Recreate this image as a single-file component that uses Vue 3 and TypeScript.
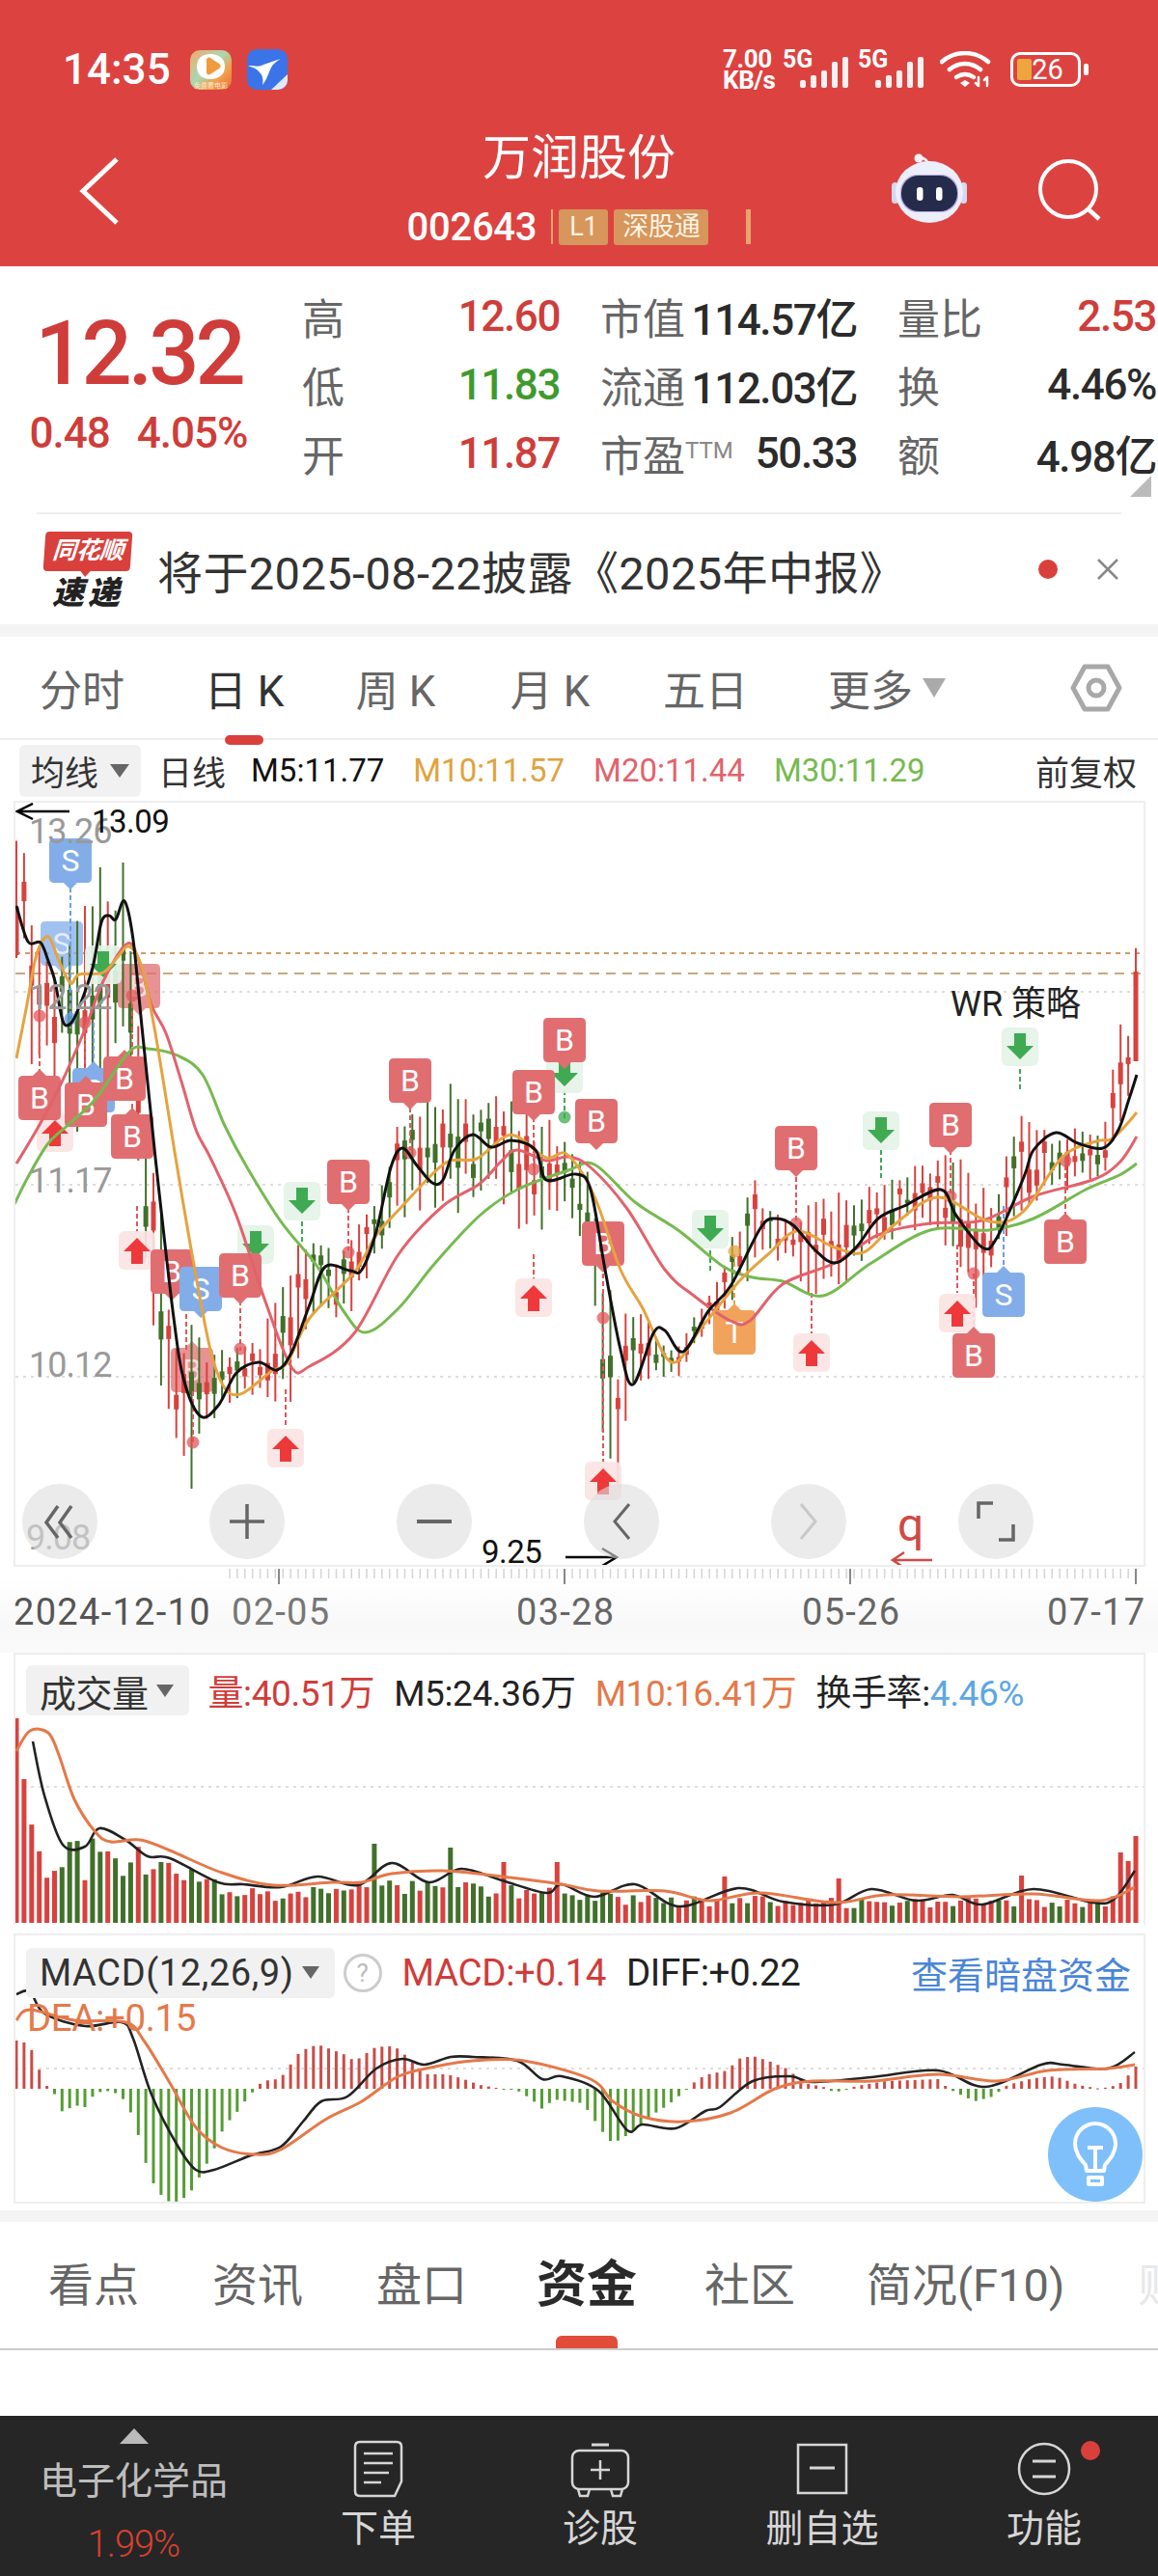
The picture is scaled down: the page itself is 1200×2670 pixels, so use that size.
<template>
  <div class="page">
    <header class="top">
      <div class="status">
        <span class="clock">14:35</span>
        <svg class="app-icon" width="43" height="41" viewBox="0 0 43 41">
          <defs>
            <linearGradient id="appg" x1="0" y1="0" x2="1" y2="1">
              <stop offset="0" stop-color="#f5a86a" />
              <stop offset="0.45" stop-color="#a8d8b0" />
              <stop offset="0.7" stop-color="#f2a04c" />
              <stop offset="1" stop-color="#ec6a32" />
            </linearGradient>
          </defs>
          <rect width="43" height="41" rx="10" fill="url(#appg)" />
          <path d="M21 4c9 0 15 5 15 13s-6 13-15 13S7 25 7 17 12 4 21 4z" fill="#fff" />
          <path d="M17 10c0-2 2-3 4-2l9 6c2 1 2 4 0 5l-9 6c-2 1-4 0-4-2z" fill="#f09a3c" />
          <text x="21.5" y="38.5" class="app-small">免费看电影</text>
        </svg>
        <svg class="app-icon app-icon--gap" width="42" height="42" viewBox="0 0 42 42">
          <rect width="42" height="42" rx="10" fill="#3a74e8" />
          <path d="M1 17c7 0 11 2 16-1 6-2 11-4 18-6-5 3-8 5-10 9-3 6-4 12-9 18 1-6 0-10-3-13-3-4-7-5-12-7z" fill="#fff" />
          <path d="M42 26v6a10 10 0 0 1-10 10h-7z" fill="#dfe9fb" />
        </svg>
        <div class="status__right">
          <div class="speed"><span>7.00</span><span>KB/s</span></div>
          <div class="net"><span class="net__g">5G</span>
            <svg width="52" height="34" viewBox="0 0 52 34"><rect v-for="(h, i) in sig" :key="i" :x="i * 11" :y="34 - h" width="6" :height="h" rx="2" fill="#fff" opacity="0.92" /></svg>
          </div>
          <div class="net"><span class="net__g">5G</span>
            <svg width="52" height="34" viewBox="0 0 52 34"><rect v-for="(h, i) in sig" :key="i" :x="i * 11" :y="34 - h" width="6" :height="h" rx="2" fill="#fff" opacity="0.92" /></svg>
          </div>
          <svg class="wifi" width="54" height="38" viewBox="0 0 54 38" fill="none" stroke="#fff" stroke-width="4.5" stroke-linecap="round">
            <path d="M2 11C16-1 36-1 50 11" />
            <path d="M10 19c10-8 22-8 32 0" />
            <path d="M17 27c6-4 12-4 18 0" />
            <path d="M21 33l5-3 5 3-5 4z" fill="#fff" stroke="none" />
            <path d="M40 27v9m-3-3l3 3m9-9v9m-3-6l3-3" stroke-width="2.5" />
          </svg>
          <div class="battery"><i class="battery__fill"></i><span>26</span></div>
          <i class="battery__tip"></i>
        </div>
      </div>
      <div class="nav">
        <svg class="nav__back" width="42" height="72" viewBox="0 0 42 72" fill="none" stroke="#fff" stroke-width="5"><path d="M39 3L4 36l35 33" /></svg>
        <div class="nav__center">
          <div class="nav__title">万润股份</div>
          <div class="nav__code">
            <span>002643</span>
            <i class="sep"></i>
            <em class="badge badge--l">L1</em>
            <em class="badge">深股通</em>
            <i class="sep sep--thick"></i>
          </div>
        </div>
        <div class="nav__right">
          <svg width="80" height="74" viewBox="0 0 80 74">
            <path d="M28 5c6-1 10 3 11 9" stroke="#f4eef8" stroke-width="3" fill="none" />
            <circle cx="28" cy="5" r="4.5" fill="#f6f2fa" />
            <rect x="0" y="30" width="7" height="22" rx="3.5" fill="#d5d8f0" />
            <rect x="71" y="30" width="7" height="22" rx="3.5" fill="#d5d8f0" />
            <ellipse cx="39" cy="40" rx="35" ry="32" fill="#eceefa" />
            <rect x="9" y="22" width="60" height="39" rx="18" fill="#8a6fd0" opacity="0.55" />
            <rect x="10" y="23" width="58" height="37" rx="18" fill="#252c4b" />
            <rect x="26" y="35" width="6.5" height="14" rx="3.2" fill="#fff" />
            <rect x="46" y="35" width="6.5" height="14" rx="3.2" fill="#fff" />
          </svg>
          <svg class="nav__search" width="66" height="68" viewBox="0 0 66 68" fill="none" stroke="#fff" stroke-width="4"><circle cx="31" cy="31" r="29" /><path d="M52 52l11 10" stroke-width="4.5" /></svg>
        </div>
      </div>
    </header>

    <section class="quote">
      <div class="price">
        <div class="price__now">12.32</div>
        <div class="price__sub"><span>0.48</span><span>4.05%</span></div>
      </div>
      <div class="stats">
        <template v-for="row in stats" :key="row[0].l">
          <div v-for="c in row" :key="c.l" class="stat">
            <span class="stat__l">{{ c.l }}<sup v-if="c.sup">{{ c.sup }}</sup></span>
            <span class="stat__v" :class="c.c">{{ c.v }}</span>
          </div>
        </template>
      </div>
      <i class="corner"></i>
    </section>

    <div class="news">
      <div class="news__logo">
        <span class="news__flag"><b>同花顺</b></span>
        <span class="news__fast">速递</span>
      </div>
      <span class="news__text">将于2025-08-22披露《2025年中报》</span>
      <i class="news__dot"></i>
      <svg width="24" height="24" viewBox="0 0 24 24" stroke="#888" stroke-width="2.5"><path d="M2 2l20 20M22 2L2 22" /></svg>
    </div>
    <div class="band"></div>

    <nav class="periods">
      <span v-for="p in periods" :key="p" class="period" :class="{ 'period--on': p === '日 K' }">{{ p }}</span>
      <svg class="gear" width="54" height="50" viewBox="0 0 54 50" fill="none" stroke="#a8a8a8" stroke-width="5" stroke-linejoin="round">
        <path d="M15 3h24l12 22-12 22H15L3 25z" />
        <circle cx="27" cy="25" r="8" />
      </svg>
    </nav>

    <div class="ma">
      <span class="chip">均线<i class="tri"></i></span>
      <span class="ma__day">日线</span>
      <span class="ma__v ma__v--first">M5:11.77</span>
      <span class="ma__v c-m10">M10:11.57</span>
      <span class="ma__v c-m20">M20:11.44</span>
      <span class="ma__v c-m30">M30:11.29</span>
      <span class="ma__adj">前复权</span>
    </div>

    <div class="kline">
      <svg class="fill" viewBox="16 832 1169 790" width="1169" height="790">
        <g stroke="#ddd" stroke-width="2" stroke-dasharray="3 5">
          <line x1="16" x2="1185" y1="1028" y2="1028" />
          <line x1="16" x2="1185" y1="1228" y2="1228" />
          <line x1="16" x2="1185" y1="1427" y2="1427" />
        </g>
        <line x1="16" x2="1185" y1="988" y2="988" stroke="#cf9a66" stroke-width="2" stroke-dasharray="5 5" />
        <line x1="16" x2="1185" y1="1009" y2="1009" stroke="#c9a87c" stroke-width="2" stroke-dasharray="10 7" />

        <g v-for="t in tags.filter((m) => m.under)" :key="t.key">
          <path :d="tagPath(t)" :fill="tagFill(t.k)" opacity="0.75" />
          <text :x="t.x" :y="t.y + 11" class="tag-text" opacity="0.7">{{ t.k }}</text>
        </g>

        <g v-for="c in candles" :key="c.x">
          <line :x1="c.x" :x2="c.x" :y1="c.high" :y2="c.low" :stroke="c.color" stroke-width="2" />
          <rect :x="c.x - 2.5" :y="c.top" width="5" :height="c.h" :fill="c.color" />
        </g>

        <g v-for="s in stems" :key="s.x + '-' + s.y1">
          <line :x1="s.x" :x2="s.x" :y1="s.y1" :y2="s.y2" :stroke="s.c" stroke-width="2" stroke-dasharray="5 3" />
          <circle v-if="s.dot" :cx="s.x" :cy="s.dot" r="6.5" :fill="s.c" opacity="0.75" />
        </g>

        <g v-for="a in arrows" :key="a.x + '-' + a.y">
          <rect :x="a.x - 19" :y="a.y - 20" width="38" height="40" rx="6" :fill="a.up ? '#fbe4e4' : '#e4f3e7'" opacity="0.92" />
          <path v-if="a.up" :d="`M${a.x} ${a.y - 13}l14 14h-8v13h-12v-13h-8z`" fill="#ee383a" />
          <path v-else :d="`M${a.x} ${a.y + 13}l14 -14h-8v-13h-12v13h-8z`" fill="#3faa52" />
        </g>

        <g v-for="t in tags.filter((m) => !m.under)" :key="t.key">
          <path :d="tagPath(t)" :fill="tagFill(t.k)" />
          <text :x="t.x" :y="t.y + 11" class="tag-text">{{ t.k }}</text>
        </g>

        <path :d="smooth(m30)" class="ma-line" stroke="#76ba50" />
        <path :d="smooth(m20)" class="ma-line" stroke="#e2626c" />
        <path :d="smooth(m10)" class="ma-line" stroke="#e5a340" />
        <path :d="smooth(m5)" class="ma-line" stroke="#111" />

        <text x="30" y="874" class="axis-price">13.26</text>
        <text x="30" y="1046" class="axis-price">12.22</text>
        <text x="30" y="1236" class="axis-price">11.17</text>
        <text x="30" y="1427" class="axis-price">10.12</text>
        <text x="27" y="1606" class="axis-price">9.08</text>

        <path d="M72 841H18m16-8l-16 8 16 8" fill="none" stroke="#000" stroke-width="2.5" />
        <text x="95" y="863" class="mark-text">13.09</text>
        <text x="499" y="1620" class="mark-text">9.25</text>
        <path d="M586 1614h52m-14-9l15 9-15 9" fill="none" stroke="#000" stroke-width="2.5" />
        <text x="985" y="1053" class="wr-text">WR 策略</text>
        <text x="930" y="1597" class="q-text">q</text>
        <path d="M966 1617h-40m11-8l-12 8 12 8" fill="none" stroke="#cf4a45" stroke-width="2.5" />
      </svg>
      <div class="tools">
        <button class="tool"><svg width="40" height="40" viewBox="0 0 40 40" fill="none" stroke="#666" stroke-width="3.5"><path d="M18 4L6 21l12 16M32 4L20 21l12 16" /></svg></button>
        <button class="tool"><svg width="36" height="36" viewBox="0 0 36 36" stroke="#666" stroke-width="3.5"><path d="M18 0v36M0 18h36" /></svg></button>
        <button class="tool"><svg width="36" height="36" viewBox="0 0 36 36" stroke="#666" stroke-width="4"><path d="M0 18h36" /></svg></button>
        <button class="tool"><svg width="24" height="40" viewBox="0 0 24 40" fill="none" stroke="#666" stroke-width="3"><path d="M20 2L5 20l15 18" /></svg></button>
        <button class="tool"><svg width="24" height="40" viewBox="0 0 24 40" fill="none" stroke="#c8c8c8" stroke-width="3"><path d="M4 2l15 18L4 38" /></svg></button>
        <button class="tool"><svg width="42" height="42" viewBox="0 0 42 42" fill="none" stroke="#666" stroke-width="3.5"><path d="M18 2H3v16M24 40h15V24" /></svg></button>
      </div>
    </div>

    <div class="axis">
      <svg viewBox="0 1624 1200 89" width="1200" height="89">
        <line v-for="x in fineTicks" :key="x" :x1="x" :x2="x" y1="1626" y2="1636" stroke="#d4d4d4" stroke-width="1.5" />
        <line v-for="x in [289, 585, 881, 1177]" :key="x" :x1="x" :x2="x" y1="1626" y2="1642" stroke="#888" stroke-width="2" />
        <text x="14" y="1684" class="date date--first">2024-12-10</text>
        <text x="240" y="1684" class="date date--fade">02-05</text>
        <text x="535" y="1684" class="date">03-28</text>
        <text x="831" y="1684" class="date">05-26</text>
        <text x="1085" y="1684" class="date">07-17</text>
      </svg>
    </div>

    <div class="panel panel--vol">
      <svg class="fill" viewBox="16 1715 1169 278" width="1169" height="278">
        <line x1="16" x2="1185" y1="1852" y2="1852" stroke="#ddd" stroke-width="2" stroke-dasharray="3 5" />
        <rect v-for="b in volBars" :key="b.x" :x="b.x - 2.5" :y="b.y" width="5" :height="1993 - b.y" :fill="b.c" />
        <path :d="smooth(volA)" class="vol-line" stroke="#222" />
        <path :d="smooth(volB)" class="vol-line vol-line--w" stroke="#e4794a" />
      </svg>
      <div class="panel__head">
        <span class="chip chip--sm chip--vol">成交量<i class="tri tri--sm"></i></span>
        <span class="c-red">量:40.51万</span>
        <span>M5:24.36万</span>
        <span class="c-org">M10:16.41万</span>
        <span>换手率:<span class="c-blue">4.46%</span></span>
      </div>
    </div>

    <div class="panel panel--macd">
      <svg class="fill" viewBox="16 2006 1169 277" width="1169" height="277">
        <line x1="16" x2="1185" y1="2144" y2="2144" stroke="#ddd" stroke-width="2" stroke-dasharray="3 5" />
        <rect v-for="b in macdBars" :key="b.x" :x="b.x - 1.5" :y="b.y" width="3" :height="b.h" :fill="b.c" />
        <path :d="smooth(macdA)" class="vol-line" stroke="#222" />
        <path :d="smooth(macdB)" class="vol-line vol-line--w" stroke="#e4794a" />
      </svg>
      <div class="panel__head panel__head--macd">
        <span class="chip chip--sm chip--macd">MACD(12,26,9)<i class="tri tri--sm"></i></span>
        <i class="help">?</i>
        <span class="c-red">MACD:+0.14</span>
        <span>DIFF:+0.22</span>
        <a class="dark-link">查看暗盘资金</a>
      </div>
      <div class="dea">DEA:+0.15</div>
      <div class="bulb">
        <svg width="48" height="68" viewBox="0 0 48 68" fill="none" stroke="#fff" stroke-width="4" stroke-linejoin="round">
          <path d="M14 45C8 38 3 32 3 23a21 21 0 0 1 42 0c0 9-5 15-11 22l-1 6H15z" />
          <path d="M16 27h16M24 27v22M17 58h14v7H17z" />
        </svg>
      </div>
    </div>
    <div class="band band--low"></div>

    <nav class="sections">
      <span v-for="s in sections" :key="s" class="section" :class="{ 'section--on': s === '资金' }">{{ s }}</span>
      <span class="section section--fade">财</span>
    </nav>
    <div class="blank"></div>

    <footer class="bar">
      <div class="bar__sector">
        <i class="bar__tri"></i>
        <span class="bar__name">电子化学品</span>
        <span class="bar__pct">1.99%</span>
      </div>
      <div class="bar__item">
        <svg width="52" height="60" viewBox="0 0 52 60" fill="none" stroke="#d6d6d6" stroke-width="2.5">
          <path d="M2 7q0-5 5-5h38q5 0 5 5v36l-7 15H7q-5 0-5-5z" />
          <path d="M11 14h30M11 24h30M11 34h26M11 44h18" />
        </svg>
        <span>下单</span>
      </div>
      <div class="bar__item">
        <svg width="62" height="60" viewBox="0 0 62 60" fill="none" stroke="#d6d6d6" stroke-width="2.5">
          <path d="M22 5h18" stroke-width="3" />
          <rect x="2" y="11" width="58" height="40" rx="7" />
          <path d="M31 21v20M21 31h20" />
          <path d="M8 51l2 7h8l2-7M42 51l2 7h8l2-7" />
        </svg>
        <span>诊股</span>
      </div>
      <div class="bar__item">
        <svg width="54" height="60" viewBox="0 0 54 60" fill="none" stroke="#d6d6d6" stroke-width="2.5">
          <rect x="2" y="5" width="50" height="50" />
          <path d="M14 29h26" stroke-width="3" />
        </svg>
        <span>删自选</span>
      </div>
      <div class="bar__item bar__item--dot">
        <svg width="56" height="60" viewBox="0 0 56 60" fill="none" stroke="#d6d6d6" stroke-width="2.5">
          <circle cx="28" cy="30" r="26" />
          <path d="M16 22h24M16 38h24" stroke-width="3" />
        </svg>
        <span>功能</span>
      </div>
    </footer>
  </div>
</template>

<script setup lang="ts">
type Pt = [number, number]

interface Tag {
  key: string
  k: string
  x: number
  y: number
  dir: 'up' | 'down'
  under?: boolean
}

const sig = [8, 13, 18, 27, 32]

const stats = [
  [
    { l: '高', v: '12.60', c: 'c-red' },
    { l: '市值', v: '114.57亿', c: '' },
    { l: '量比', v: '2.53', c: 'c-red' },
  ],
  [
    { l: '低', v: '11.83', c: 'c-green' },
    { l: '流通', v: '112.03亿', c: '' },
    { l: '换', v: '4.46%', c: '' },
  ],
  [
    { l: '开', v: '11.87', c: 'c-red' },
    { l: '市盈', sup: 'TTM', v: '50.33', c: '' },
    { l: '额', v: '4.98亿', c: '' },
  ],
]

const periods = ['分时', '日 K', '周 K', '月 K', '五日', '更多']
const sections = ['看点', '资讯', '盘口', '资金', '社区', '简况(F10)']

// traced from the chart, in page pixels
const m5: Pt[] = [[17,939],[29,976],[42,977],[50,996],[57,1017],[65,1058],[73,1061],[82,1044],[96,1003],[105,956],[113,949],[120,953],[129,934],[138,974],[147,1064],[161,1200],[180,1366],[191,1432],[208,1468],[226,1457],[245,1423],[268,1412],[287,1420],[302,1402],[321,1352],[337,1313],[363,1317],[375,1316],[390,1276],[405,1210],[417,1190],[432,1208],[448,1226],[459,1223],[471,1192],[490,1176],[509,1189],[530,1182],[555,1192],[566,1223],[597,1217],[612,1233],[627,1316],[643,1399],[656,1435],[677,1382],[689,1379],[708,1401],[734,1359],[757,1333],[788,1273],[803,1263],[822,1270],[845,1296],[865,1309],[887,1293],[910,1263],[937,1250],[975,1233],[991,1260],[1018,1293],[1033,1283],[1061,1220],[1071,1192],[1094,1174],[1117,1185],[1143,1190],[1159,1171],[1170,1139],[1178,1114]]
const m10: Pt[] = [[17,1097],[27,1046],[38,989],[50,971],[61,996],[73,1019],[82,1010],[107,1008],[122,992],[134,981],[147,1003],[161,1071],[182,1200],[199,1300],[218,1399],[233,1439],[249,1445],[268,1432],[283,1420],[298,1412],[321,1366],[367,1319],[390,1280],[417,1250],[448,1217],[467,1203],[494,1201],[520,1180],[536,1178],[566,1200],[585,1195],[604,1217],[620,1250],[643,1316],[666,1356],[696,1412],[727,1376],[765,1329],[796,1300],[826,1276],[865,1293],[895,1298],[926,1270],[972,1241],[1025,1266],[1060,1256],[1101,1199],[1136,1183],[1151,1181],[1166,1167],[1178,1153]]
const m20: Pt[] = [[17,1206],[38,1171],[61,1128],[88,1067],[107,1017],[132,978],[145,999],[157,1042],[172,1071],[188,1121],[203,1171],[218,1200],[245,1260],[275,1349],[302,1417],[321,1416],[367,1382],[413,1300],[459,1250],[497,1227],[520,1203],[536,1192],[566,1203],[589,1199],[612,1210],[650,1253],[689,1316],[719,1343],[757,1369],[777,1369],[811,1331],[865,1309],[910,1280],[964,1268],[1018,1265],[1071,1240],[1132,1223],[1160,1205],[1178,1178]]
const m30: Pt[] = [[14,1250],[29,1220],[50,1185],[73,1164],[99,1139],[134,1090],[153,1087],[184,1094],[210,1114],[233,1167],[256,1210],[291,1266],[329,1313],[356,1359],[379,1381],[413,1356],[451,1309],[497,1260],[536,1233],[589,1213],[616,1207],[658,1246],[704,1276],[750,1313],[780,1324],[811,1328],[853,1343],[903,1309],[964,1275],[1025,1275],[1071,1263],[1125,1233],[1160,1218],[1178,1206]]

const highEnv: Pt[] = [[17,863],[25,865],[32,930],[40,930],[50,1000],[65,950],[80,906],[96,903],[105,874],[113,885],[129,881],[137,944],[145,1094],[153,1217],[165,1210],[180,1366],[200,1365],[226,1390],[265,1390],[304,1281],[329,1263],[350,1300],[375,1265],[390,1220],[405,1185],[420,1140],[440,1120],[480,1115],[510,1130],[550,1130],[560,1160],[590,1160],[600,1190],[612,1210],[627,1300],[640,1380],[655,1340],[680,1380],[700,1400],[720,1360],[735,1330],[755,1290],[770,1245],[777,1213],[800,1250],[830,1260],[850,1230],[880,1230],[920,1210],[950,1205],[975,1190],[990,1180],[1025,1241],[1040,1210],[1057,1131],[1075,1150],[1095,1170],[1145,1165],[1160,1050],[1170,1070],[1177,955]]
const lowEnv: Pt[] = [[17,1035],[25,980],[32,1130],[40,1120],[50,1117],[57,1200],[65,1103],[73,1240],[85,1140],[100,1120],[130,1100],[137,1160],[145,1220],[155,1362],[165,1430],[170,1470],[178,1535],[186,1490],[200,1563],[208,1520],[226,1460],[250,1450],[265,1455],[300,1460],[320,1370],[335,1375],[360,1370],[375,1340],[395,1300],[420,1270],[470,1260],[505,1245],[552,1300],[570,1280],[590,1260],[610,1300],[625,1490],[640,1575],[655,1440],[705,1428],[720,1400],[745,1370],[765,1340],[790,1310],[820,1310],[840,1360],[850,1330],[870,1335],[900,1310],[940,1270],[985,1300],[1000,1340],[1010,1370],[1030,1320],[1050,1270],[1080,1240],[1130,1230],[1150,1210],[1165,1160],[1177,1110]]

const volA: Pt[] = [[34,1805],[46,1861],[65,1912],[88,1914],[103,1895],[130,1907],[153,1924],[176,1926],[226,1951],[252,1953],[291,1956],[329,1945],[371,1954],[406,1931],[444,1951],[478,1937],[520,1949],[566,1962],[582,1953],[616,1966],[658,1953],[704,1976],[765,1957],[811,1971],[865,1974],[903,1958],[949,1970],[987,1964],[1018,1974],[1071,1958],[1132,1972],[1155,1968],[1176,1939]]
const volB: Pt[] = [[17,1815],[31,1794],[50,1796],[61,1819],[77,1865],[99,1899],[115,1909],[145,1907],[176,1918],[230,1941],[283,1954],[344,1951],[375,1951],[406,1942],[459,1939],[520,1945],[582,1953],[620,1960],[689,1960],[735,1970],[788,1962],[865,1972],[918,1964],[995,1966],[1071,1963],[1140,1970],[1176,1956]]
const volEnv: Pt[] = [[17,1781],[25,1844],[33,1880],[49,1925],[57,1937],[65,1928],[73,1886],[80,1891],[90,1926],[97,1876],[105,1899],[130,1920],[176,1900],[190,1930],[230,1950],[300,1955],[385,1950],[464,1945],[520,1950],[620,1960],[700,1965],[800,1965],[900,1968],[1000,1965],[1100,1965],[1150,1965],[1161,1920],[1176,1903]]
const volSpikes: Pt[] = [[385,1911],[464,1915],[520,1930],[578,1930],[754,1945],[872,1947],[1057,1944],[1161,1920],[1176,1903],[17,1781],[25,1844]]

const macdA: Pt[] = [[17,2067],[31,2064],[46,2087],[88,2100],[126,2096],[138,2113],[157,2171],[184,2224],[203,2249],[222,2249],[260,2234],[291,2225],[314,2199],[333,2178],[360,2173],[390,2144],[417,2134],[440,2140],[467,2132],[490,2132],[536,2136],[562,2155],[582,2152],[620,2167],[650,2208],[666,2202],[700,2206],[731,2188],[746,2184],[780,2157],[819,2152],[842,2158],[903,2153],[972,2146],[1021,2163],[1079,2140],[1102,2140],[1148,2144],[1176,2127]]
const macdB: Pt[] = [[17,2094],[31,2083],[77,2094],[130,2096],[149,2115],[176,2159],[203,2205],[230,2226],[264,2233],[291,2228],[337,2197],[375,2178],[413,2152],[451,2142],[490,2136],[543,2136],[612,2155],[635,2178],[666,2194],[708,2199],[757,2190],[803,2165],[842,2157],[903,2157],[972,2150],[1033,2157],[1086,2146],[1148,2144],[1176,2140]]
const macdHist: Pt[] = [[17,50],[25,48],[33,40],[41,19],[50,0],[57,-6],[65,-25],[77,-17],[88,-19],[99,-4],[115,-2],[126,-8],[138,-29],[145,-54],[153,-84],[162,-105],[170,-113],[178,-119],[187,-115],[195,-111],[203,-98],[218,-71],[233,-38],[245,-25],[256,-10],[265,0],[272,8],[287,10],[297,17],[305,33],[314,40],[329,46],[340,42],[356,36],[367,29],[375,33],[386,42],[398,44],[409,44],[421,34],[440,15],[463,15],[478,11],[497,4],[520,0],[535,-1],[551,-11],[562,-21],[574,-11],[589,-13],[604,-15],[624,-44],[635,-57],[650,-48],[673,-29],[692,-17],[708,-4],[723,10],[734,15],[754,19],[765,31],[780,34],[796,29],[815,21],[834,6],[853,2],[865,-4],[888,3],[918,8],[972,10],[983,0],[995,-6],[1010,-13],[1029,-8],[1044,4],[1071,11],[1094,13],[1117,4],[1140,0],[1159,4],[1167,11],[1176,23]]

function seeded(seed: number) {
  let s = seed
  return () => {
    s = (s + 0x6d2b79f5) | 0
    let t = Math.imul(s ^ (s >>> 15), 1 | s)
    t = (t + Math.imul(t ^ (t >>> 7), 61 | t)) ^ t
    return ((t ^ (t >>> 14)) >>> 0) / 4294967296
  }
}

function interp(p: Pt[], x: number) {
  if (x <= p[0][0]) return p[0][1]
  for (let i = 1; i < p.length; i++) {
    if (x <= p[i][0]) {
      const r = (x - p[i - 1][0]) / (p[i][0] - p[i - 1][0])
      return p[i - 1][1] + (p[i][1] - p[i - 1][1]) * r
    }
  }
  return p[p.length - 1][1]
}

function smooth(p: Pt[]) {
  let d = `M${p[0][0]} ${p[0][1]}`
  for (let i = 0; i < p.length - 1; i++) {
    const a = p[i - 1] || p[i]
    const b = p[i]
    const c = p[i + 1]
    const e = p[i + 2] || c
    const c1x = b[0] + (c[0] - a[0]) / 6
    const c1y = b[1] + (c[1] - a[1]) / 6
    const c2x = c[0] - (e[0] - b[0]) / 6
    const c2y = c[1] - (e[1] - b[1]) / 6
    d += `C${c1x.toFixed(1)} ${c1y.toFixed(1)} ${c2x.toFixed(1)} ${c2y.toFixed(1)} ${c[0]} ${c[1]}`
  }
  return d
}

const RED = '#d8423e'
const DARK = '#41702a'
const step = 1160 / 147
const rnd = seeded(2643)

const candles = Array.from({ length: 148 }, (_, i) => {
  const x = +(17 + i * step).toFixed(1)
  const span = interp(lowEnv, x) - interp(highEnv, x)
  const high = interp(highEnv, x) + rnd() * span * 0.28
  const low = interp(lowEnv, x) - rnd() * span * 0.28
  let top = high + (0.15 + rnd() * 0.45) * (low - high)
  let h = (0.08 + rnd() * 0.2) * (low - high)
  let color = rnd() > (x > 700 ? 0.32 : 0.45) ? RED : DARK
  if (i < 2 || i > 143) color = RED
  if (i === 0) { top = 940; h = 50 }
  if (i === 147) { top = 1007; h = 93 }
  return { x, high, low, top, h, color }
})

const volBars = candles.map((c) => {
  const env = interp(volEnv, c.x)
  const spike = volSpikes.find((s) => Math.abs(s[0] - c.x) < step / 2)
  const y = spike ? spike[1] : env + rnd() * (1993 - env) * 0.42
  return { x: c.x, y, c: c.color }
})

const macdBars = candles.map((c) => {
  const v = interp(macdHist, c.x)
  return {
    x: c.x,
    y: v >= 0 ? 2165 - v : 2165,
    h: Math.max(Math.abs(v), 1),
    c: v >= 0 ? '#cb4c47' : '#559c33',
  }
})

const fineTicks = Array.from({ length: 120 }, (_, i) => 238 + i * step)

const tags: Tag[] = [
  { key: 's2', k: 'S', x: 64, y: 978, dir: 'down', under: true },
  { key: 'b-a', k: 'B', x: 144, y: 1022, dir: 'down', under: true },
  { key: 'b-f', k: 'B', x: 199, y: 1420, dir: 'up', under: true },
  { key: 's1', k: 'S', x: 73, y: 892, dir: 'down' },
  { key: 'b1', k: 'B', x: 41, y: 1138, dir: 'up' },
  { key: 's3', k: 'S', x: 97, y: 1130, dir: 'up' },
  { key: 'b2', k: 'B', x: 89, y: 1145, dir: 'up' },
  { key: 'b3', k: 'B', x: 129, y: 1118, dir: 'up' },
  { key: 'b4', k: 'B', x: 137, y: 1178, dir: 'up' },
  { key: 'b5', k: 'B', x: 425, y: 1120, dir: 'down' },
  { key: 'b6', k: 'B', x: 585, y: 1078, dir: 'down' },
  { key: 'b7', k: 'B', x: 553, y: 1132, dir: 'down' },
  { key: 'b8', k: 'B', x: 618, y: 1162, dir: 'down' },
  { key: 'b9', k: 'B', x: 361, y: 1225, dir: 'down' },
  { key: 'b10', k: 'B', x: 825, y: 1190, dir: 'down' },
  { key: 'b11', k: 'B', x: 985, y: 1166, dir: 'down' },
  { key: 'b12', k: 'B', x: 178, y: 1318, dir: 'down' },
  { key: 's4', k: 'S', x: 208, y: 1336, dir: 'down' },
  { key: 'b13', k: 'B', x: 249, y: 1322, dir: 'down' },
  { key: 'b14', k: 'B', x: 625, y: 1289, dir: 'down' },
  { key: 't1', k: 'T', x: 761, y: 1381, dir: 'up' },
  { key: 'b15', k: 'B', x: 1009, y: 1405, dir: 'up' },
  { key: 's5', k: 'S', x: 1040, y: 1342, dir: 'up' },
  { key: 'b16', k: 'B', x: 1104, y: 1287, dir: 'up' },
]

const arrows = [
  { x: 57, y: 1174, up: true },
  { x: 107, y: 1000, up: false },
  { x: 585, y: 1113, up: false },
  { x: 142, y: 1296, up: true },
  { x: 265, y: 1290, up: false },
  { x: 313, y: 1245, up: false },
  { x: 296, y: 1501, up: true },
  { x: 553, y: 1345, up: true },
  { x: 625, y: 1535, up: true },
  { x: 736, y: 1274, up: false },
  { x: 841, y: 1402, up: true },
  { x: 992, y: 1361, up: true },
  { x: 913, y: 1172, up: false },
  { x: 1057, y: 1085, up: false },
]

const stems: { x: number; y1: number; y2: number; c: string; dot?: number }[] = [
  { x: 73, y1: 920, y2: 1066, c: '#6a9fe6', dot: 1056 },
  { x: 41, y1: 1060, y2: 1112, c: '#e0575a', dot: 1053 },
  { x: 88, y1: 1066, y2: 1122, c: '#e0575a', dot: 1060 },
  { x: 97, y1: 1060, y2: 1106, c: '#6a9fe6' },
  { x: 137, y1: 1040, y2: 1154, c: '#e0575a', dot: 1032 },
  { x: 425, y1: 1148, y2: 1192, c: '#e0575a', dot: 1195 },
  { x: 553, y1: 1158, y2: 1210, c: '#e0575a', dot: 1212 },
  { x: 585, y1: 1130, y2: 1160, c: '#3faa52', dot: 1158 },
  { x: 361, y1: 1252, y2: 1296, c: '#e0575a', dot: 1298 },
  { x: 142, y1: 1250, y2: 1276, c: '#e0575a' },
  { x: 193, y1: 1362, y2: 1400, c: '#e0575a' },
  { x: 249, y1: 1348, y2: 1400, c: '#e0575a', dot: 1398 },
  { x: 296, y1: 1440, y2: 1480, c: '#e0575a' },
  { x: 313, y1: 1266, y2: 1290, c: '#3faa52' },
  { x: 553, y1: 1300, y2: 1326, c: '#e0575a' },
  { x: 625, y1: 1312, y2: 1515, c: '#e0575a', dot: 1366 },
  { x: 200, y1: 1442, y2: 1495, c: '#e0575a', dot: 1495 },
  { x: 736, y1: 1296, y2: 1320, c: '#3faa52' },
  { x: 761, y1: 1300, y2: 1352, c: '#e5a340', dot: 1297 },
  { x: 825, y1: 1212, y2: 1268, c: '#e0575a', dot: 1268 },
  { x: 841, y1: 1340, y2: 1382, c: '#e0575a' },
  { x: 985, y1: 1192, y2: 1240, c: '#e0575a', dot: 1240 },
  { x: 913, y1: 1192, y2: 1222, c: '#3faa52' },
  { x: 1057, y1: 1108, y2: 1130, c: '#3faa52' },
  { x: 992, y1: 1290, y2: 1340, c: '#e0575a' },
  { x: 1009, y1: 1320, y2: 1376, c: '#e0575a', dot: 1320 },
  { x: 1040, y1: 1250, y2: 1314, c: '#6a9fe6' },
  { x: 1104, y1: 1200, y2: 1260, c: '#e0575a', dot: 1203 },
]

function tagFill(k: string) {
  if (k === 'S') return '#82ade9'
  if (k === 'T') return '#f1a35c'
  return '#e06e70'
}

function tagPath(t: Tag) {
  const w = 22
  const h = 23
  const l = t.x - w
  const top = t.y - h
  const tip = t.dir === 'down' ? `M${t.x - 7} ${t.y + h}L${t.x} ${t.y + h + 7}L${t.x + 7} ${t.y + h}Z` : `M${t.x - 7} ${top}L${t.x} ${top - 7}L${t.x + 7} ${top}Z`
  return `M${l + 5} ${top}h${2 * w - 10}q5 0 5 5v${2 * h - 10}q0 5 -5 5h${10 - 2 * w}q-5 0 -5 -5v${10 - 2 * h}q0 -5 5 -5Z${tip}`
}
</script>

<style scoped>
.page {
  width: 1200px;
  height: 2670px;
  overflow: hidden;
  background: #fff;
  color: #222;
  font-family: Roboto, "Noto Sans CJK SC", sans-serif;
}

.top {
  height: 276px;
  background: #dc4340;
  color: #fff;
}

.status {
  height: 144px;
  display: flex;
  align-items: center;
  padding: 0 72px 0 65px;
}

.clock {
  font-size: 44px;
  font-weight: 500;
  width: 132px;
}

.app-small {
  font-size: 7px;
  fill: #ffe9cf;
  text-anchor: middle;
}

.app-icon--gap {
  margin-left: 16px;
}

.status__right {
  margin-left: auto;
  display: flex;
  align-items: center;
}

.speed {
  display: flex;
  flex-direction: column;
  width: 60px;
  margin-right: 2px;
  font-size: 26px;
  font-weight: 700;
  line-height: 22px;
  letter-spacing: -0.4px;
}

.net {
  position: relative;
  width: 70px;
  height: 38px;
  display: flex;
  justify-content: flex-end;
  align-items: flex-end;
  margin-right: 8px;
}

.net__g {
  position: absolute;
  left: 0;
  top: -2px;
  font-size: 25px;
  line-height: 22px;
  font-weight: 700;
}

.wifi {
  margin-left: 7px;
}

.battery {
  position: relative;
  width: 73px;
  height: 36px;
  margin-left: 19px;
  border: 3px solid #fff;
  border-radius: 10px;
  box-sizing: border-box;
  font-size: 29px;
  line-height: 30px;
  text-align: center;
  overflow: hidden;
  padding-left: 4px;
}

.battery__fill {
  position: absolute;
  left: 4px;
  top: 4px;
  bottom: 4px;
  width: 15px;
  background: #eda53e;
  border-radius: 2px;
}

.battery span {
  position: relative;
}

.battery__tip {
  width: 5px;
  height: 12px;
  margin-left: 3px;
  background: #fff;
  border-radius: 2px;
}

.nav {
  height: 132px;
  display: grid;
  grid-template-columns: 1fr auto 1fr;
  align-items: start;
}

.nav__back {
  margin: 18px 0 0 82px;
}

.nav__center {
  display: flex;
  flex-direction: column;
  align-items: center;
}

.nav__title {
  font-size: 50px;
  line-height: 56px;
  margin-top: -8px;
}

.nav__code {
  margin-top: 24px;
  height: 38px;
  display: flex;
  align-items: center;
  font-size: 40px;
  font-weight: 500;
  letter-spacing: -0.3px;
}

.sep {
  width: 2px;
  height: 36px;
  margin: 0 6px 0 15px;
  background: #e7a46b;
}

.sep--thick {
  width: 5px;
  margin: 0 0 0 39px;
}

.badge {
  font-style: normal;
  font-weight: 400;
  height: 37px;
  line-height: 36px;
  padding: 0 9px;
  margin-left: 6px;
  background: #d6965c;
  border-radius: 3px;
  font-size: 27px;
  color: #fff3e2;
}

.badge--l {
  margin-left: 0;
  padding: 0 11px;
}

.nav__right {
  display: flex;
  justify-content: flex-end;
  align-items: flex-start;
  padding: 15px 58px 0 0;
}

.nav__search {
  margin: 6px 0 0 72px;
}

.quote {
  position: relative;
  height: 255px;
  display: flex;
  box-sizing: border-box;
}

.price {
  width: 313px;
  flex: none;
  padding: 41px 26px 0 0;
  box-sizing: border-box;
  text-align: center;
  color: #cf3d3a;
}

.price__now {
  font-size: 92px;
  font-weight: 500;
  line-height: 100px;
  letter-spacing: -4px;
}

.price__sub {
  margin-top: 7px;
  font-size: 44px;
  font-weight: 500;
  line-height: 50px;
  display: flex;
  justify-content: center;
  gap: 28px;
  letter-spacing: -1px;
}

.stats {
  display: grid;
  grid-template-columns: 267px 266px 268px;
  grid-auto-rows: 71px;
  column-gap: 42px;
  padding-top: 16px;
}

.stat {
  display: flex;
  justify-content: space-between;
  align-items: center;
  font-size: 44px;
  font-weight: 500;
  letter-spacing: -1.4px;
}

.stat__l {
  color: #666;
  font-size: 44px;
  font-weight: 400;
  letter-spacing: 0;
}

.stat__l sup {
  font-size: 24px;
  line-height: 0;
  vertical-align: 14px;
  color: #888;
}

.stat__v {
  color: #2b2b2b;
}

.stat__v.c-red { color: #cf3d3a; }
.stat__v.c-green { color: #3f9a2e; }

.corner {
  position: absolute;
  right: 7px;
  bottom: 16px;
  width: 22px;
  height: 22px;
  background: #bbb;
  clip-path: polygon(100% 0, 100% 100%, 0 100%);
}

.news {
  height: 116px;
  margin: 0 38px;
  border-top: 2px solid #efefef;
  box-sizing: border-box;
  display: flex;
  align-items: center;
  padding-right: 2px;
}

.news__logo {
  width: 94px;
  margin-left: 6px;
  display: flex;
  flex-direction: column;
  align-items: center;
  flex: none;
}

.news__flag {
  position: relative;
  width: 90px;
  height: 41px;
  line-height: 40px;
  background: #d9403c;
  border-radius: 4px;
  transform: skewX(-4deg);
  text-align: center;
}

.news__flag::after {
  content: "";
  position: absolute;
  left: 38px;
  bottom: -6px;
  border-left: 6px solid transparent;
  border-right: 6px solid transparent;
  border-top: 7px solid #d9403c;
}

.news__flag b {
  color: #fff;
  font-size: 25px;
  font-weight: 700;
  font-style: italic;
  letter-spacing: -0.5px;
}

.news__fast {
  margin-top: 8px;
  font-size: 33px;
  line-height: 30px;
  font-weight: 900;
  font-style: italic;
  letter-spacing: 4px;
  color: #222;
}

.news__text {
  margin-left: 25px;
  font-size: 47px;
  letter-spacing: 0.4px;
  color: #333;
  flex: 1;
  white-space: nowrap;
}

.news__dot {
  width: 20px;
  height: 20px;
  border-radius: 50%;
  background: #d9403c;
  margin-right: 40px;
}

.band {
  height: 13px;
  background: #f4f4f4;
}

.band--low {
  height: 12px;
  margin-top: 7px;
}

.periods {
  position: relative;
  height: 105px;
  padding-left: 5px;
  display: grid;
  grid-template-columns: 160px 176px 138px 182px 140px 208px;
  align-items: center;
  border-bottom: 2px solid #eee;
  box-sizing: content-box;
}

.period {
  position: relative;
  font-size: 44px;
  color: #666;
  text-align: center;
}

.period:last-of-type {
  text-align: left;
  padding-left: 57px;
}

.period:last-of-type::after {
  content: "";
  position: absolute;
  left: 155px;
  top: 22px;
  border-left: 12px solid transparent;
  border-right: 12px solid transparent;
  border-top: 20px solid #aaa;
}

.period--on {
  color: #333;
}

.period--on::after {
  content: "";
  position: absolute;
  left: 50%;
  bottom: -27px;
  width: 40px;
  height: 10px;
  margin-left: -20px;
  background: #d9403c;
  border-radius: 5px;
}

.gear {
  position: absolute;
  left: 1109px;
  top: 28px;
}

.ma {
  height: 63px;
  display: flex;
  align-items: center;
  padding: 0 22px 0 20px;
  font-size: 33px;
}

.chip {
  height: 54px;
  padding: 0 12px;
  display: inline-flex;
  align-items: center;
  gap: 12px;
  background: #f1f1f1;
  border-radius: 6px;
  font-size: 35px;
  color: #333;
}

.tri {
  border-left: 10px solid transparent;
  border-right: 10px solid transparent;
  border-top: 14px solid #666;
}

.tri--sm {
  border-left-width: 9px;
  border-right-width: 9px;
  border-top-width: 13px;
}

.ma__day {
  margin-left: 18px;
  font-size: 35px;
  color: #333;
}

.ma__v {
  margin-left: 30px;
  color: #111;
}

.ma__v--first {
  margin-left: 26px;
}

.c-m10 { color: #e0a33e; }
.c-m20 { color: #e2626c; }
.c-m30 { color: #76ba50; }

.ma__adj {
  margin-left: auto;
  font-size: 35px;
  color: #333;
}

.kline {
  position: relative;
  height: 794px;
  margin: 0 13px 0 14px;
  border: 2px solid #eee;
  box-sizing: border-box;
  overflow: hidden;
}

.fill {
  position: absolute;
  left: 0;
  top: 0;
}

.tag-text {
  font-size: 32px;
  fill: #fff;
  text-anchor: middle;
}

.ma-line {
  fill: none;
  stroke-width: 3;
  stroke-linejoin: round;
}

.vol-line {
  fill: none;
  stroke-width: 2.6;
  stroke-linejoin: round;
}

.vol-line--w {
  stroke-width: 3;
}

.axis-price {
  font-size: 36px;
  fill: #999;
  letter-spacing: -1px;
}

.mark-text {
  font-size: 33px;
  fill: #111;
  letter-spacing: -0.5px;
}

.wr-text {
  font-size: 36px;
  fill: #222;
}

.q-text {
  font-size: 48px;
  fill: #cf4a45;
}

.tools {
  position: absolute;
  left: 7px;
  bottom: 6px;
  display: flex;
  gap: 116px;
}

.tool {
  width: 78px;
  height: 78px;
  padding: 0;
  border: 0;
  border-radius: 50%;
  background: rgba(222, 222, 222, 0.6);
  display: flex;
  align-items: center;
  justify-content: center;
}

.axis {
  height: 89px;
  background: linear-gradient(to bottom, #fff 10%, #f8f8f8 70%, #fafafa);
}

.axis svg {
  display: block;
}

.date {
  font-size: 38px;
  fill: #666;
  letter-spacing: 1.3px;
}

.date--first {
  fill: #555;
}

.date--fade {
  fill: #777;
}

.panel {
  position: relative;
  margin: 0 13px 0 14px;
  border: 2px solid #eee;
  border-bottom-width: 0;
  box-sizing: border-box;
}

.panel--vol {
  height: 282px;
}

.panel--macd {
  height: 280px;
  margin-top: 9px;
  border-bottom-width: 2px;
}

.panel__head {
  position: relative;
  display: flex;
  align-items: center;
  gap: 20px;
  padding: 10px 0 0 11px;
  font-size: 37px;
  letter-spacing: -0.4px;
  color: #222;
}

.panel__head--macd {
  padding-top: 11px;
  font-size: 38.5px;
  gap: 21px;
}

.chip--sm {
  height: 52px;
  padding: 0 12px 0 14px;
  gap: 8px;
  font-size: 38px;
  letter-spacing: -0.5px;
}

.chip--vol {
  padding-right: 16px;
}

.chip--macd {
  padding-right: 16px;
  letter-spacing: 0.6px;
}

.c-red { color: #cf3d3a; }
.c-green { color: #3f9a2e; }
.c-org { color: #e4794a; }
.c-blue { color: #5ca6e4; }

.help {
  width: 34px;
  height: 34px;
  margin: 0 0 0 -12px;
  border: 3px solid #ccc;
  border-radius: 50%;
  color: #bbb;
  font-style: normal;
  font-size: 26px;
  line-height: 34px;
  text-align: center;
}

.dark-link {
  margin-left: auto;
  margin-right: 13px;
  color: #4a86d8;
  font-size: 38px;
  letter-spacing: 0;
}

.dea {
  position: relative;
  margin: -2px 0 0 12px;
  font-size: 38.5px;
  line-height: 44px;
  letter-spacing: -0.4px;
  color: #e4794a;
}

.bulb {
  position: absolute;
  right: 1px;
  bottom: 0;
  width: 98px;
  height: 98px;
  border-radius: 50%;
  background: #7fc0fb;
  display: flex;
  align-items: center;
  justify-content: center;
}

.sections {
  height: 131px;
  padding-left: 50px;
  display: flex;
  align-items: center;
  gap: 76px;
  border-bottom: 2px solid #ccc;
  overflow: hidden;
  box-sizing: content-box;
}

.section {
  font-size: 47px;
  line-height: 60px;
  color: #666;
  white-space: nowrap;
  flex: none;
}

.section:nth-child(4) {
  margin-left: -4px;
}

.section:nth-child(5) {
  margin-left: -6px;
}

.section:nth-child(6) {
  margin-left: -2px;
}

.section--on {
  position: relative;
  font-size: 52px;
  font-weight: 700;
  color: #2a2a2a;
}

.section--on::after {
  content: "";
  position: absolute;
  left: 20px;
  right: 20px;
  bottom: -35px;
  height: 13px;
  background: #e24c3b;
  border-radius: 6px 6px 0 0;
}

.section--fade {
  color: #e8e8e8;
}

.blank {
  height: 68px;
}

.bar {
  height: 166px;
  background: #262626;
  color: #d6d6d6;
  display: grid;
  grid-template-columns: 277px repeat(4, 230px);
}

.bar__sector {
  display: flex;
  flex-direction: column;
  align-items: center;
  padding-top: 13px;
}

.bar__tri {
  border-left: 15px solid transparent;
  border-right: 15px solid transparent;
  border-bottom: 16px solid #bbb;
}

.bar__name {
  margin-top: 17px;
  font-size: 39px;
  line-height: 44px;
  color: #bdbdbd;
}

.bar__pct {
  margin-top: 18px;
  font-size: 38px;
  line-height: 50px;
  font-weight: 300;
  color: #d9402f;
  letter-spacing: -1px;
}

.bar__item {
  position: relative;
  display: flex;
  flex-direction: column;
  align-items: center;
  padding-top: 25px;
  font-size: 39px;
  line-height: 44px;
}

.bar__item span {
  margin-top: 10px;
}

.bar__item--dot::after {
  content: "";
  position: absolute;
  left: 153px;
  top: 26px;
  width: 20px;
  height: 20px;
  background: #d9403c;
  border-radius: 50%;
}
</style>
